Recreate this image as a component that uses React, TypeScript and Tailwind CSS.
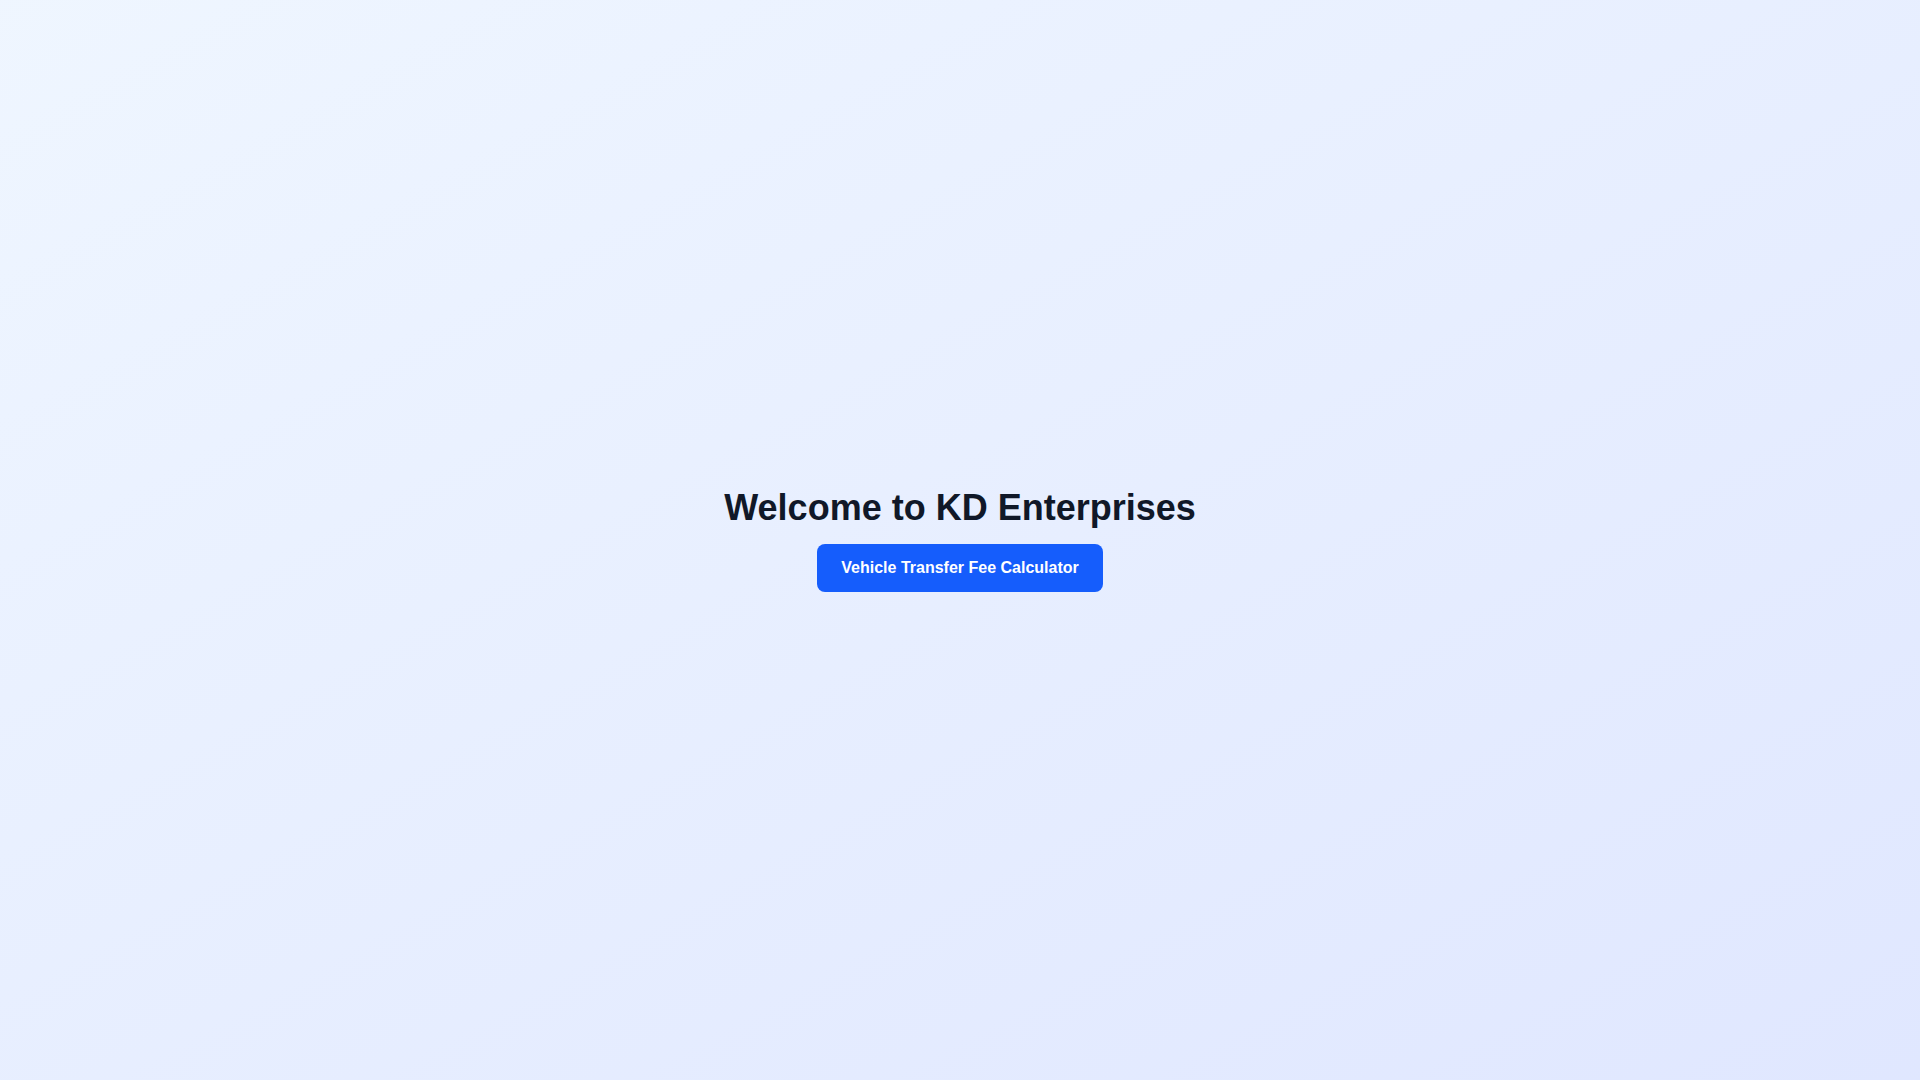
export default function App() {
	return (
		<div
			className="min-h-screen flex flex-col items-center justify-center bg-gradient-to-br from-blue-50 to-indigo-100"
			style={{ fontFamily: '"Liberation Sans", Arial, sans-serif' }}
		>
			<h1 className="text-4xl font-bold text-gray-900 mb-4">
				Welcome to KD Enterprises
			</h1>
			<button className="bg-blue-600 text-white font-bold px-6 py-3 rounded-lg hover:bg-blue-700 transition-colors">
				Vehicle Transfer Fee Calculator
			</button>
		</div>
	);
}
